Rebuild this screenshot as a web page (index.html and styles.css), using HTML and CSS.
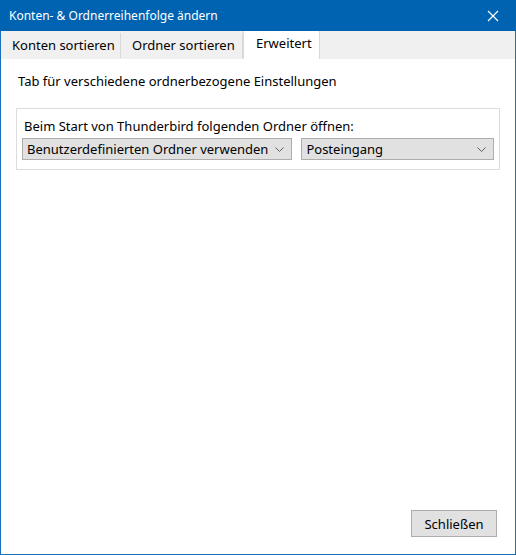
FILE: index.html
```html
<!DOCTYPE html>
<html lang="de">
<head>
    <meta charset="UTF-8">
    <title>Konten- &amp; Ordnerreihenfolge ändern</title>
    <link rel="stylesheet" href="styles.css">
</head>
<body>
    <div class="window">
        <div class="titlebar">
            <span class="title">Konten- &amp; Ordnerreihenfolge ändern</span>
            <span class="close">
                <svg width="12" height="12" viewBox="0 0 12 12">
                    <path d="M1 1 L11 11 M11 1 L1 11" stroke="#fff" stroke-width="1.2" fill="none"/>
                </svg>
            </span>
        </div>

        <div class="tabs">
            <div class="tab">Konten sortieren</div>
            <div class="tab">Ordner sortieren</div>
            <div class="tab selected">Erweitert</div>
        </div>

        <div class="content">
            <p class="intro">Tab für verschiedene ordnerbezogene Einstellungen</p>

            <div class="group">
                <div class="group-label">Beim Start von Thunderbird folgenden Ordner öffnen:</div>
                <div class="row">
                    <div class="select first">
                        <span>Benutzerdefinierten Ordner verwenden</span>
                        <svg class="chevron" width="9" height="5" viewBox="0 0 9 5">
                            <path d="M0.5 0.5 L4.5 4.5 L8.5 0.5" stroke="#606060" fill="none"/>
                        </svg>
                    </div>
                    <div class="select second">
                        <span>Posteingang</span>
                        <svg class="chevron" width="9" height="5" viewBox="0 0 9 5">
                            <path d="M0.5 0.5 L4.5 4.5 L8.5 0.5" stroke="#606060" fill="none"/>
                        </svg>
                    </div>
                </div>
            </div>

            <div class="footer">
                <button class="button">Schließen</button>
            </div>
        </div>
    </div>
</body>
</html>
```

FILE: styles.css
```css
html, body {
    margin: 0;
    padding: 0;
}
body {
    font-family: "Noto Sans", "Open Sans", sans-serif;
    font-size: 12px;
    color: #000;
    background: #fff;
}
.window {
    width: 516px;
    height: 555px;
    box-sizing: border-box;
    border: 1px solid #1a6fb9;
    border-top: none;
    display: flex;
    flex-direction: column;
}
.titlebar {
    height: 31px;
    margin: 0 -1px;
    background: #0063b1;
    color: #fff;
    display: flex;
    align-items: center;
    justify-content: space-between;
    padding: 0 0 0 9px;
}
.title {
    font-size: 12px;
}
.close {
    width: 46px;
    height: 31px;
    display: flex;
    align-items: center;
    justify-content: center;
}
.tabs {
    height: 27px;
    background: #f0f0f0;
    display: flex;
    align-items: flex-end;
    border-bottom: 1px solid #f0f0f0;
}
.tab {
    height: 25px;
    box-sizing: border-box;
    padding: 0 0 0 11px;
    line-height: 24px;
    font-size: 13px;
    white-space: nowrap;
    color: #000;
    border-right: 1px solid #d9d9d9;
}
.tab:first-child {
    width: 120px;
}
.tab:nth-child(2) {
    width: 122px;
}
.tab.selected {
    width: 77px;
    height: 28px;
    background: #fff;
    line-height: 25px;
    padding: 0 0 0 12px;
    border-left: 1px solid #d9d9d9;
    margin-bottom: -1px;
}
.content {
    flex: 1;
    background: #fff;
    display: flex;
    flex-direction: column;
    padding: 13px 15px 14px 15px;
}
.intro {
    margin: 0 0 0 2px;
    font-size: 13px;
    line-height: 18px;
}
.group {
    margin-top: 18px;
    border: 1px solid #dcdcdc;
    padding: 8px 5px 9px 5px;
}
.group-label {
    font-size: 13px;
    line-height: 18px;
    margin-left: 2px;
}
.row {
    display: flex;
    gap: 9px;
    margin-top: 3px;
}
.select {
    height: 22px;
    box-sizing: border-box;
    background: #e1e1e1;
    border: 1px solid #adadad;
    display: flex;
    align-items: center;
    justify-content: space-between;
    padding: 0 7px 0 4px;
    font-size: 13px;
}
.select.first {
    width: 271px;
}
.select.second {
    width: 193px;
}
.footer {
    margin-top: auto;
    display: flex;
    justify-content: flex-end;
}
.button {
    width: 86px;
    height: 27px;
    background: #e1e1e1;
    border: 1px solid #adadad;
    font-family: inherit;
    font-size: 13px;
    color: #000;
    padding: 0;
    margin-right: 3px;
    margin-bottom: 3px;
}
```
